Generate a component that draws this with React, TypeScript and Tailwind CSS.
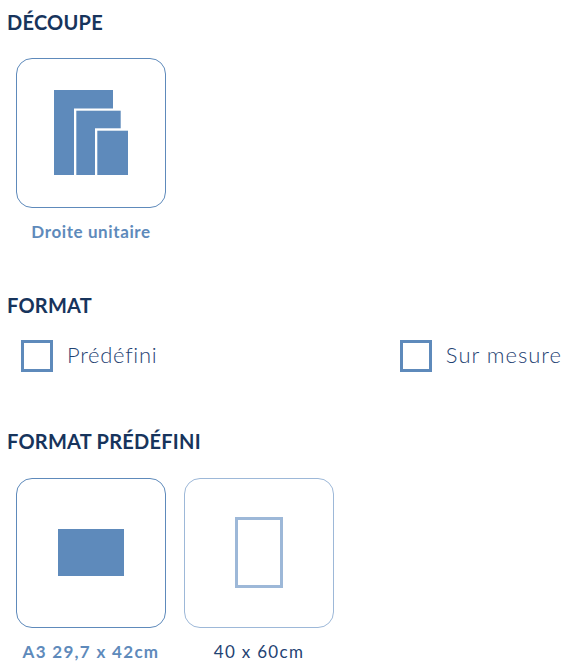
const sans = "font-['Lato','Noto_Sans',sans-serif]";

const Card = ({ children, muted }: { children: React.ReactNode; muted?: boolean }) => (
  <div className={`flex h-[150px] w-[150px] items-center justify-center rounded-[16px] border ${muted ? 'border-[#9db8d8]' : 'border-[#5e8abb]'}`}>
    {children}
  </div>
);

const Heading = ({ children }: { children: React.ReactNode }) => (
  <h2 className="pl-[7px] text-[20px] leading-[24px] font-bold tracking-[0.25px] text-[#17345c]">{children}</h2>
);

const Check = ({ label, className }: { label: string; className: string }) => (
  <div className="flex items-center gap-[14px]">
    <div className="h-[32px] w-[32px] border-[3px] border-[#5e8abb]" />
    <span className={`-mt-[2px] text-[22px] leading-[32px] font-light text-[#1f4373] ${className}`}>{label}</span>
  </div>
);

export default function App() {
  return (
    <div className={`${sans} h-[669px] w-[569px] overflow-hidden bg-white pt-[10px]`}>
      <Heading>DÉCOUPE</Heading>
      <div className="mt-[24px] ml-[16px] w-[150px]">
        <Card>
          <svg width="74" height="85" viewBox="0 0 74 85" className="mb-[1px]">
            <rect x="0" y="0" width="59" height="85" fill="#5e8abb" />
            <rect x="20" y="18.5" width="46.7" height="66.5" fill="#fff" />
            <rect x="22.3" y="20.7" width="44.4" height="64.3" fill="#5e8abb" />
            <rect x="41" y="38.3" width="33" height="46.7" fill="#fff" />
            <rect x="43.3" y="40.7" width="30.7" height="44.3" fill="#5e8abb" />
          </svg>
        </Card>
        <p className="mt-[14px] text-center text-[17px] leading-[20px] font-bold tracking-[0.6px] text-[#5e8abb]">Droite unitaire</p>
      </div>

      <div className="mt-[51px]">
        <Heading>FORMAT</Heading>
      </div>
      <div className="mt-[23px] flex justify-between pr-[7px] pl-[21px]">
        <Check label="Prédéfini" className="tracking-[0.7px]" />
        <Check label="Sur mesure" className="tracking-[1px]" />
      </div>

      <div className="mt-[57px]">
        <Heading>FORMAT PRÉDÉFINI</Heading>
      </div>
      <div className="mt-[25px] ml-[16px] flex gap-[18px]">
        <div className="w-[150px]">
          <Card>
            <div className="mb-[1px] h-[47px] w-[66px] bg-[#5e8abb]" />
          </Card>
          <p className="mt-[14px] text-center text-[17px] leading-[20px] font-bold tracking-[1.3px] whitespace-nowrap text-[#5e8abb]">A3 29,7 x 42cm</p>
        </div>
        <div className="w-[150px]">
          <Card muted>
            <div className="mb-[1px] h-[71px] w-[48px] border-[3px] border-[#9db8d8]" />
          </Card>
          <p className="mt-[14px] text-center text-[17px] leading-[20px] font-normal tracking-[1.3px] text-[#1f4373]">40 x 60cm</p>
        </div>
      </div>
    </div>
  );
}
